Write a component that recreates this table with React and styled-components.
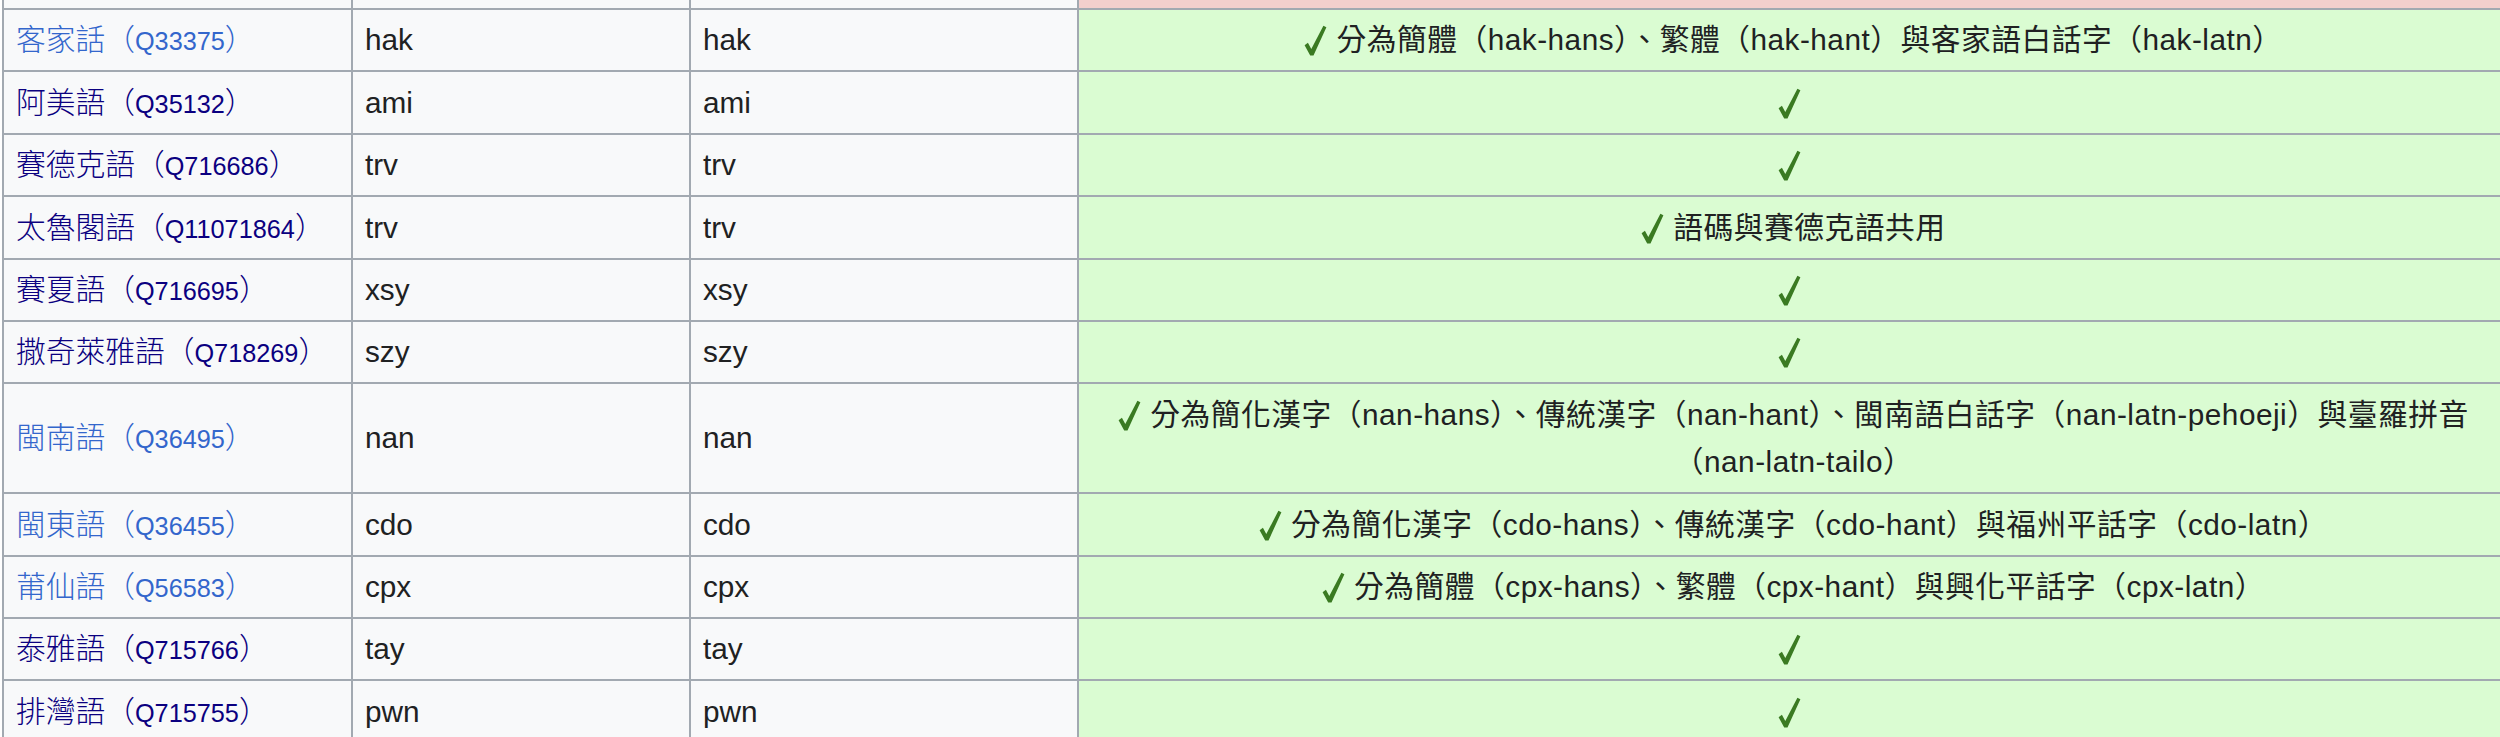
import React from "react";
import styled, { createGlobalStyle } from "styled-components";

const Global = createGlobalStyle`
  html, body {
    margin: 0;
    padding: 0;
    overflow: hidden;
    background: #ffffff;
  }
`;

const Page = styled.div`
  padding-left: 2px;
  margin-top: -24px;
`;

const Table = styled.table`
  border-collapse: collapse;
  table-layout: fixed;
  width: 2506px;
  background: #f8f9fa;
  color: #202122;
  font-family: "Liberation Sans", "Noto Sans CJK TC", sans-serif;
  font-size: 29.75px;
  line-height: 47.6px;
`;

const Cell = styled.td`
  border: 2px solid #a2a9b1;
  padding: ${(p) => (p.$stub ? "0" : "6.4px 11.9px")};
  height: ${(p) => (p.$stub ? "30px" : "auto")};
  vertical-align: middle;
  text-align: ${(p) => (p.$center ? "center" : "left")};
  background: ${(p) =>
    p.$tone === "yes" ? "#dafcd2" : p.$tone === "no" ? "#f3cfcd" : "#f8f9fa"};
`;

const LangLink = styled.a`
  color: ${(p) => (p.$visited ? "#0b0080" : "#3366cc")};
  text-decoration: none;
  font-weight: 300;
`;

const Qid = styled.span`
  font-size: 85%;
  line-height: 1;
`;

const Code = styled.span`
  white-space: nowrap;
`;

const Note = styled.span`
  letter-spacing: 0.5px;
`;

const Check = styled.svg`
  width: 23px;
  height: 31px;
  vertical-align: -6px;
  margin-right: 9px;
`;

const YesMark = () => (
  <Check viewBox="0 0 23 31" aria-label="是">
    <path
      d="M0.6 20.2 L3.9 17.8 L7.3 24 L19.4 0.8 L22.4 2.3 L9.5 30.6 L6.2 30.6 Z"
      fill="#3a7a22"
    />
  </Check>
);

const renderNote = (text) =>
  text.split(/(（[^）]+）)/).filter(Boolean).map((part, i) =>
    part.startsWith("（") ? <Code key={i}>{part}</Code> : <React.Fragment key={i}>{part}</React.Fragment>
  );

const rows = [
  { name: "客家話", q: "Q33375", code: "hak", visited: false, note: "分為簡體（hak-hans）、繁體（hak-hant）與客家語白話字（hak-latn）" },
  { name: "阿美語", q: "Q35132", code: "ami", visited: true, note: "" },
  { name: "賽德克語", q: "Q716686", code: "trv", visited: true, note: "" },
  { name: "太魯閣語", q: "Q11071864", code: "trv", visited: true, note: "語碼與賽德克語共用" },
  { name: "賽夏語", q: "Q716695", code: "xsy", visited: true, note: "" },
  { name: "撒奇萊雅語", q: "Q718269", code: "szy", visited: true, note: "" },
  { name: "閩南語", q: "Q36495", code: "nan", visited: false, note: "分為簡化漢字（nan-hans）、傳統漢字（nan-hant）、閩南語白話字（nan-latn-pehoeji）與臺羅拼音（nan-latn-tailo）" },
  { name: "閩東語", q: "Q36455", code: "cdo", visited: false, note: "分為簡化漢字（cdo-hans）、傳統漢字（cdo-hant）與福州平話字（cdo-latn）" },
  { name: "莆仙語", q: "Q56583", code: "cpx", visited: false, note: "分為簡體（cpx-hans）、繁體（cpx-hant）與興化平話字（cpx-latn）" },
  { name: "泰雅語", q: "Q715766", code: "tay", visited: true, note: "" },
  { name: "排灣語", q: "Q715755", code: "pwn", visited: true, note: "" },
];

export default function App() {
  return (
    <>
      <Global />
      <Page>
        <Table>
          <colgroup>
            <col style={{ width: "349px" }} />
            <col style={{ width: "338px" }} />
            <col style={{ width: "388px" }} />
            <col style={{ width: "1431px" }} />
          </colgroup>
          <tbody>
            <tr>
              <Cell $stub />
              <Cell $stub />
              <Cell $stub />
              <Cell $stub $tone="no" />
            </tr>
            {rows.map((r) => (
              <tr key={r.name}>
                <Cell>
                  <LangLink href="#" $visited={r.visited}>
                    {r.name}（<Qid>{r.q}</Qid>）
                  </LangLink>
                </Cell>
                <Cell>{r.code}</Cell>
                <Cell>{r.code}</Cell>
                <Cell $center $tone="yes">
                  <YesMark />
                  {r.note && <Note>{renderNote(r.note)}</Note>}
                </Cell>
              </tr>
            ))}
          </tbody>
        </Table>
      </Page>
    </>
  );
}
